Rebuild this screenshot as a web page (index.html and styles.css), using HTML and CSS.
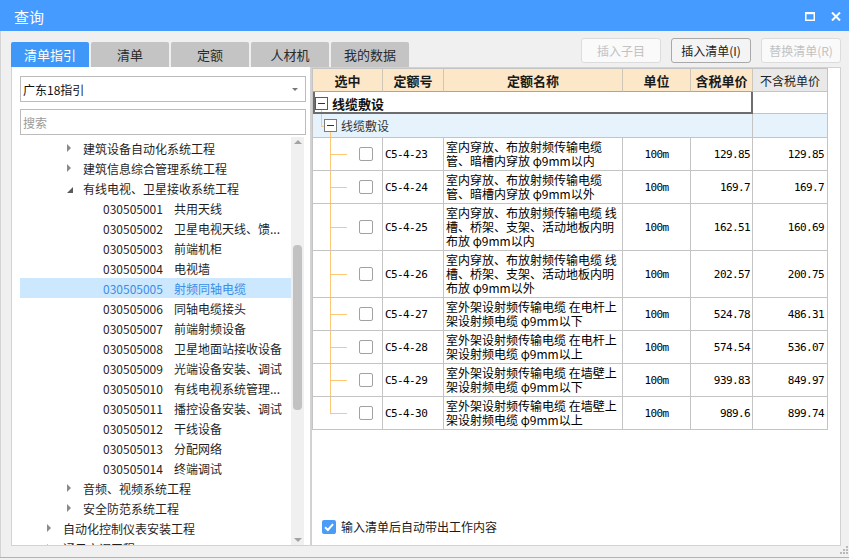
FILE: index.html
```html
<!DOCTYPE html>
<html lang="zh-CN">
<head>
<meta charset="utf-8">
<title>查询</title>
<link rel="stylesheet" href="styles.css">
</head>
<body>
<div class="window">
  <header class="titlebar">
    <span class="title">查询</span>
    <div class="winctl">
      <svg class="ic" width="10" height="9" viewBox="0 0 10 9"><rect x="0.75" y="1" width="8.5" height="7.25" fill="none" stroke="#fff" stroke-width="1.5"/><rect x="0" y="0" width="10" height="2.2" fill="#fff"/></svg>
      <svg class="ic" width="10" height="9" viewBox="0 0 10 9"><path d="M1 0.5L9 8.5M9 0.5L1 8.5" stroke="#fff" stroke-width="2"/></svg>
    </div>
  </header>
  <div class="content">
    <div class="toolbar">
      <div class="tabs">
        <div class="tab active">清单指引</div>
        <div class="tab">清单</div>
        <div class="tab">定额</div>
        <div class="tab">人材机</div>
        <div class="tab">我的数据</div>
      </div>
      <div class="actions">
        <button class="btn" disabled>插入子目</button>
        <button class="btn on">插入清单(I)</button>
        <button class="btn" disabled>替换清单(R)</button>
      </div>
    </div>
    <div class="main">
      <section class="left">
        <div class="select"><span>广东18指引</span><span class="caret"></span></div>
        <div class="search">搜索</div>
        <div class="treewrap">
          <div class="tree">
            <div class="node l2"><span class="tw closed"></span>建筑设备自动化系统工程</div>
            <div class="node l2"><span class="tw closed"></span>建筑信息综合管理系统工程</div>
            <div class="node l2"><span class="tw open"></span>有线电视、卫星接收系统工程</div>
            <div class="node l3"><span class="code">030505001</span>共用天线</div>
            <div class="node l3"><span class="code">030505002</span>卫星电视天线、馈...</div>
            <div class="node l3"><span class="code">030505003</span>前端机柜</div>
            <div class="node l3"><span class="code">030505004</span>电视墙</div>
            <div class="node l3 sel"><span class="code">030505005</span>射频同轴电缆</div>
            <div class="node l3"><span class="code">030505006</span>同轴电缆接头</div>
            <div class="node l3"><span class="code">030505007</span>前端射频设备</div>
            <div class="node l3"><span class="code">030505008</span>卫星地面站接收设备</div>
            <div class="node l3"><span class="code">030505009</span>光端设备安装、调试</div>
            <div class="node l3"><span class="code">030505010</span>有线电视系统管理...</div>
            <div class="node l3"><span class="code">030505011</span>播控设备安装、调试</div>
            <div class="node l3"><span class="code">030505012</span>干线设备</div>
            <div class="node l3"><span class="code">030505013</span>分配网络</div>
            <div class="node l3"><span class="code">030505014</span>终端调试</div>
            <div class="node l2"><span class="tw closed"></span>音频、视频系统工程</div>
            <div class="node l2"><span class="tw closed"></span>安全防范系统工程</div>
            <div class="node l1"><span class="tw closed"></span>自动化控制仪表安装工程</div>
            <div class="node l1"><span class="tw closed"></span>通风空调工程</div>
          </div>
          <div class="vscroll">
            <span class="arr up"></span>
            <span class="thumb"></span>
            <span class="arr down"></span>
          </div>
        </div>
      </section>
      <section class="right">
        <div class="grid">
          <div class="gr head">
            <div class="c">选中</div>
            <div class="c">定额号</div>
            <div class="c">定额名称</div>
            <div class="c">单位</div>
            <div class="c">含税单价</div>
            <div class="c nt">不含税单价</div>
          </div>
          <div class="gr grp1">
            <div class="c span5"><span class="mbox"></span><b class="gname">线缆敷设</b></div>
            <div class="c"></div>
          </div>
          <div class="gr grp2">
            <div class="c span5"><span class="mbox light"></span><span class="gname2">线缆敷设</span></div>
            <div class="c"></div>
          </div>
          <div class="gr dr">
            <div class="c pick"><span class="cb"></span></div>
            <div class="c code-c">C5-4-23</div>
            <div class="c name">室内穿放、布放射频传输电缆<br>管、暗槽内穿放 φ9mm以内</div>
            <div class="c unit">100m</div>
            <div class="c price">129.85</div>
            <div class="c price p2">129.85</div>
          </div>
          <div class="gr dr">
            <div class="c pick"><span class="cb"></span></div>
            <div class="c code-c">C5-4-24</div>
            <div class="c name">室内穿放、布放射频传输电缆<br>管、暗槽内穿放 φ9mm以外</div>
            <div class="c unit">100m</div>
            <div class="c price">169.7</div>
            <div class="c price p2">169.7</div>
          </div>
          <div class="gr dr tall">
            <div class="c pick"><span class="cb"></span></div>
            <div class="c code-c">C5-4-25</div>
            <div class="c name">室内穿放、布放射频传输电缆 线<br>槽、桥架、支架、活动地板内明<br>布放 φ9mm以内</div>
            <div class="c unit">100m</div>
            <div class="c price">162.51</div>
            <div class="c price p2">160.69</div>
          </div>
          <div class="gr dr tall">
            <div class="c pick"><span class="cb"></span></div>
            <div class="c code-c">C5-4-26</div>
            <div class="c name">室内穿放、布放射频传输电缆 线<br>槽、桥架、支架、活动地板内明<br>布放 φ9mm以外</div>
            <div class="c unit">100m</div>
            <div class="c price">202.57</div>
            <div class="c price p2">200.75</div>
          </div>
          <div class="gr dr">
            <div class="c pick"><span class="cb"></span></div>
            <div class="c code-c">C5-4-27</div>
            <div class="c name">室外架设射频传输电缆 在电杆上<br>架设射频电缆 φ9mm以下</div>
            <div class="c unit">100m</div>
            <div class="c price">524.78</div>
            <div class="c price p2">486.31</div>
          </div>
          <div class="gr dr">
            <div class="c pick"><span class="cb"></span></div>
            <div class="c code-c">C5-4-28</div>
            <div class="c name">室外架设射频传输电缆 在电杆上<br>架设射频电缆 φ9mm以上</div>
            <div class="c unit">100m</div>
            <div class="c price">574.54</div>
            <div class="c price p2">536.07</div>
          </div>
          <div class="gr dr">
            <div class="c pick"><span class="cb"></span></div>
            <div class="c code-c">C5-4-29</div>
            <div class="c name">室外架设射频传输电缆 在墙壁上<br>架设射频电缆 φ9mm以下</div>
            <div class="c unit">100m</div>
            <div class="c price">939.83</div>
            <div class="c price p2">849.97</div>
          </div>
          <div class="gr dr">
            <div class="c pick last"><span class="cb"></span></div>
            <div class="c code-c">C5-4-30</div>
            <div class="c name">室外架设射频传输电缆 在墙壁上<br>架设射频电缆 φ9mm以上</div>
            <div class="c unit">100m</div>
            <div class="c price">989.6</div>
            <div class="c price p2">899.74</div>
          </div>
        </div>
        <label class="autocheck">
          <span class="bluecb"><svg width="14" height="14" viewBox="0 0 14 14"><path d="M3 7.2L5.9 10L11 4.2" fill="none" stroke="#fff" stroke-width="2"/></svg></span>
          输入清单后自动带出工作内容
        </label>
      </section>
    </div>
  </div>
  <svg class="grip" width="8" height="8" viewBox="0 0 8 8"><g fill="#b9b9b9"><rect x="6" y="0" width="2" height="2"/><rect x="3" y="3" width="2" height="2"/><rect x="6" y="3" width="2" height="2"/><rect x="0" y="6" width="2" height="2"/><rect x="3" y="6" width="2" height="2"/><rect x="6" y="6" width="2" height="2"/></g></svg>
</div>
</body>
</html>
```

FILE: styles.css
```css
* { box-sizing: border-box; }
html, body { margin: 0; padding: 0; }
body {
  width: 849px;
  height: 560px;
  overflow: hidden;
  background: #f0f0f0;
  font-family: "Noto Sans CJK SC", "Noto Sans", sans-serif;
  color: #222;
}
.window {
  position: relative;
  height: 558px;
  display: flex;
  flex-direction: column;
  border-bottom: 1px solid #b3b3b3;
}
.titlebar {
  height: 31px;
  flex: none;
  background: #459bff;
  display: flex;
  align-items: flex-start;
  padding-left: 14px;
  padding-right: 8px;
}
.title {
  color: #fff;
  font-size: 15px;
  line-height: 29px;
  padding-top: 2px;
}
.winctl {
  margin-left: auto;
  display: flex;
  gap: 16px;
  padding-top: 12px;
}
.ic { display: block; }

.content {
  flex: 1;
  display: flex;
  flex-direction: column;
  border-left: 1px solid #d4d4d4;
  padding: 0 8px 0 10px;
}
.toolbar {
  height: 36px;
  flex: none;
  display: flex;
}
.tabs {
  align-self: flex-end;
  display: flex;
  gap: 2px;
}
.tab {
  width: 78px;
  height: 25px;
  display: flex;
  align-items: center;
  justify-content: center;
  background: #c4c4c4;
  color: #2a2a2a;
  font-size: 13px;
  border-radius: 2px 2px 0 0;
}
.tab.active {
  background: #3f98f7;
  color: #fff;
}
.actions {
  margin-left: auto;
  margin-top: 7px;
  display: flex;
  gap: 10px;
}
.btn {
  width: 80px;
  height: 25px;
  padding: 0;
  border: 1px solid #dcdcdc;
  border-radius: 3px;
  background: #fafafa;
  color: #c2c2c2;
  font-family: inherit;
  font-size: 12px;
}
.btn.on {
  border-color: #a9a9a9;
  background: #f4f4f4;
  color: #1c1c1c;
}

.main {
  height: 479px;
  flex: none;
  display: flex;
}
.left {
  width: 300px;
  height: 479px;
  background: #fff;
  border: 1px solid #d2d2d2;
  border-top: 0;
  padding-top: 9px;
  display: flex;
  flex-direction: column;
}
.select, .search {
  margin-left: 8px;
  width: 286px;
  height: 26px;
  flex: none;
  border: 1px solid #bcbcbc;
  padding-left: 2px;
  display: flex;
  align-items: center;
  font-size: 12px;
  background: #fff;
}
.select { color: #111; }
.caret {
  margin-left: auto;
  margin-right: 7px;
  border-top: 3px solid #777;
  border-left: 3px solid transparent;
  border-right: 3px solid transparent;
}
.search {
  margin-top: 7px;
  color: #9a9a9a;
}
.treewrap {
  margin-top: 2px;
  margin-left: 8px;
  width: 284px;
  flex: 1;
  min-height: 0;
  display: flex;
  overflow: hidden;
}
.tree {
  flex: 1;
  padding-top: 1px;
  overflow: hidden;
}
.node {
  height: 20px;
  display: flex;
  align-items: center;
  white-space: nowrap;
  font-size: 12px;
  color: #1f1f1f;
}
.node.l1 { padding-left: 27px; }
.node.l2 { padding-left: 47px; }
.node.l3 { padding-left: 83px; }
.node.sel {
  background: #cce8ff;
  color: #3a8ee6;
}
.tw {
  width: 16px;
  height: 20px;
  flex: none;
  display: flex;
  align-items: center;
}
.tw.closed::before {
  content: "";
  border-left: 4px solid #8a8a8a;
  border-top: 4px solid transparent;
  border-bottom: 4px solid transparent;
}
.tw.open::before {
  content: "";
  margin-top: 4px;
  border-right: 6px solid #5a5a5a;
  border-top: 6px solid transparent;
}
.code {
  display: inline-block;
  width: 71px;
  flex: none;
}
.vscroll {
  width: 13px;
  flex: none;
  background: #f0f0f0;
  display: flex;
  flex-direction: column;
  align-items: center;
  padding: 3px 0;
}
.arr {
  width: 0;
  height: 0;
  border-left: 4px solid transparent;
  border-right: 4px solid transparent;
}
.arr.up { border-bottom: 4px solid #a3a3a3; }
.arr.down { border-top: 4px solid #a3a3a3; margin-top: auto; }
.thumb {
  width: 9px;
  height: 165px;
  margin-top: 101px;
  border-radius: 4px;
  background: #c2c2c2;
}

.right {
  width: 530px;
  height: 479px;
  background: #fff;
  border: 1px solid #d2d2d2;
  display: flex;
  flex-direction: column;
}
.grid {
  width: 516px;
  border-left: 1px solid #c4c4c4;
  border-top: 1px solid #c4c4c4;
}
.gr {
  display: grid;
  grid-template-columns: 70px 61px 179px 68px 62px 75px;
}
.c {
  border-right: 1px solid #c4c4c4;
  border-bottom: 1px solid #c4c4c4;
  display: flex;
  align-items: center;
  min-width: 0;
  overflow: hidden;
  color: #000;
}
.head .c {
  height: 23px;
  justify-content: center;
  background: #fde7c9;
  border-right-color: #d0c6b8;
  border-bottom-color: #7eaee3;
  font-size: 13px;
  font-weight: 700;
  color: #1a1a1a;
}
.head .c.nt {
  background: #e9e9e9;
  border-right-color: #c4c4c4;
  border-bottom-color: #c4c4c4;
  font-weight: 400;
  font-size: 12px;
  color: #222;
}
.grp1 .c { height: 22px; background: #fff; }
.grp1 .span5 {
  grid-column: span 5;
  border: 2px solid #6d6d6d;
  border-top: 0;
  padding-top: 3px;
  background: linear-gradient(#fcc776, #fcc776) 6px 18px / 1px 2px no-repeat, #fff;
}
.grp2 .c { height: 24px; background: #e6f3fd; }
.grp2 .span5 {
  grid-column: span 5;
  padding-left: 11px;
  background:
    linear-gradient(#fcc776, #fcc776) 8px 0 / 1px 13px no-repeat,
    linear-gradient(#fcc776, #fcc776) 8px 12px / 4px 1px no-repeat,
    linear-gradient(#fcc776, #fcc776) 17px 18px / 1px 100% no-repeat,
    #e6f3fd;
}
.mbox {
  width: 13px;
  height: 13px;
  flex: none;
  border: 1px solid #5a5a5a;
  background: #fff;
  display: flex;
  align-items: center;
  justify-content: center;
}
.mbox::after {
  content: "";
  width: 7px;
  height: 1px;
  background: #333;
}
.mbox.light { border-color: #7c7c7c; }
.gname {
  margin-left: 4px;
  font-size: 13px;
  font-weight: 700;
  color: #111;
}
.gname2 {
  margin-left: 4px;
  font-size: 12px;
  color: #333;
}
.dr .c { height: 33px; }
.dr.tall .c { height: 47px; }
.pick {
  padding-left: 46px;
  background:
    linear-gradient(#fcc776, #fcc776) 17px 0 / 1px 100% no-repeat,
    linear-gradient(#fcc776, #fcc776) 17px 50% / 17px 1px no-repeat;
}
.pick.last {
  background:
    linear-gradient(#fcc776, #fcc776) 17px 0 / 1px calc(50% + 1px) no-repeat,
    linear-gradient(#fcc776, #fcc776) 17px 50% / 17px 1px no-repeat;
}
.cb {
  width: 14px;
  height: 14px;
  border: 1px solid #a2a2a2;
  border-radius: 2px;
  background: #fff;
}
.code-c, .unit, .price {
  font-family: "DejaVu Sans Mono", "Liberation Mono", monospace;
  font-size: 11px;
  letter-spacing: -0.6px;
}
.code-c { padding-left: 2px; }
.name {
  padding: 0 2px;
  font-size: 12px;
  line-height: 14px;
  white-space: nowrap;
}
.unit { justify-content: center; }
.price { justify-content: flex-end; padding-right: 2px; }
.price.p2 { padding-right: 3px; }

.autocheck {
  margin-top: auto;
  padding: 0 0 11px 10px;
  display: flex;
  align-items: center;
  font-size: 12px;
  line-height: 14px;
  color: #1a1a1a;
}
.bluecb {
  width: 14px;
  height: 14px;
  margin-right: 5px;
  border-radius: 2px;
  background: #4a9cf6;
  display: flex;
}
.grip {
  position: absolute;
  right: 1px;
  bottom: 3px;
}
```
